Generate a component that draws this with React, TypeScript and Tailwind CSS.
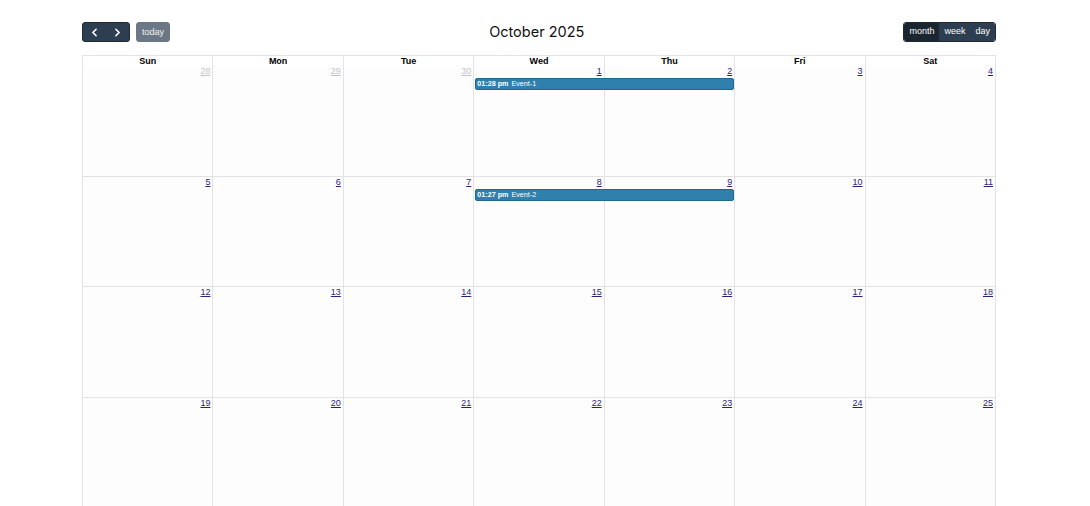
import { ChevronLeft, ChevronRight } from 'lucide-react';

type Event = { time: string; title: string };

const days = ['Sun', 'Mon', 'Tue', 'Wed', 'Thu', 'Fri', 'Sat'];

const weeks: { day: number; other?: boolean }[][] = [
  [{ day: 28, other: true }, { day: 29, other: true }, { day: 30, other: true }, { day: 1 }, { day: 2 }, { day: 3 }, { day: 4 }],
  [5, 6, 7, 8, 9, 10, 11].map((day) => ({ day })),
  [12, 13, 14, 15, 16, 17, 18].map((day) => ({ day })),
  [19, 20, 21, 22, 23, 24, 25].map((day) => ({ day })),
];

// events span Wed-Thu on the first two weeks
const weekEvents: (Event | null)[] = [
  { time: '01:28 pm', title: 'Event-1' },
  { time: '01:27 pm', title: 'Event-2' },
  null,
  null,
];

export default function App() {
  return (
    <div className="min-h-[506px] bg-white pl-[82px] pr-[94px] pt-[22px] font-['Liberation_Sans',Arial,sans-serif] text-black">
      <div className="flex h-[20px] items-center justify-between">
        <div className="flex items-center gap-[6px]">
          <div className="flex h-[20px] overflow-hidden rounded-[3px] border border-[#1e2b37] bg-[#2c3e50]">
            <button className="flex w-[23px] items-center justify-center text-white">
              <ChevronLeft size={13} strokeWidth={3} />
            </button>
            <button className="flex w-[23px] items-center justify-center text-white">
              <ChevronRight size={13} strokeWidth={3} />
            </button>
          </div>
          <button className="h-[20px] rounded-[3px] border border-[#6b7785] bg-[#6b7785] px-[5px] text-[9px] leading-none text-white/90">
            today
          </button>
        </div>
        <h2 className="font-['Inter',sans-serif] text-[14.5px] font-normal text-[#111]">October 2025</h2>
        <div className="flex h-[20px] overflow-hidden rounded-[3px] border border-[#1e2b37] text-[9px] text-white">
          <button className="bg-[#1a252f] px-[5px]">month</button>
          <button className="bg-[#2c3e50] px-[5px]">week</button>
          <button className="bg-[#2c3e50] px-[5px]">day</button>
        </div>
      </div>

      <div className="mt-[13px] border-l border-t border-[#e3e3e6]">
        <div className="grid h-[10px] grid-cols-7">
          {days.map((d) => (
            <div key={d} className="border-b border-r border-[#e3e3e6] text-center text-[9px] font-bold leading-[10px]">
              {d}
            </div>
          ))}
        </div>
        {weeks.map((week, wi) => (
          <div key={wi} className="relative grid h-[110.6px] grid-cols-7">
            {week.map((c) => (
              <div key={c.day} className="border-b border-r border-[#e3e3e6] bg-[#fefdfd] px-[2px] text-right text-[9px] leading-[10px]">
                <span className={c.other ? 'text-[#c4c4c8] underline' : 'text-[#2b1f7a] underline'}>{c.day}</span>
              </div>
            ))}
            {weekEvents[wi] && (
              <div className="absolute left-[calc(300%/7+1px)] top-[12px] flex h-[12px] w-[calc(200%/7-2px)] items-center rounded-[2px] border border-[#22678c] bg-[#2f80ad] px-[1px] text-[7.2px] leading-none text-white">
                <span className="font-bold">{weekEvents[wi]!.time}</span>
                <span className="ml-[3px]">{weekEvents[wi]!.title}</span>
              </div>
            )}
          </div>
        ))}
      </div>
    </div>
  );
}
